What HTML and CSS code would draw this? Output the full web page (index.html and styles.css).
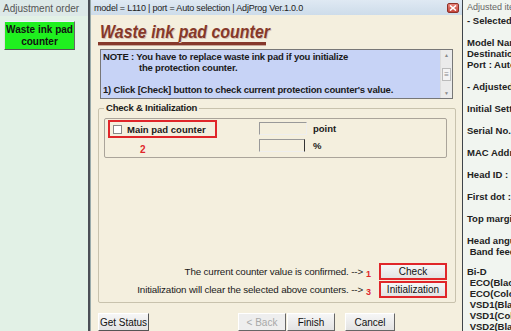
FILE: index.html
```html
<!doctype html>
<html lang="en">
<head>
<meta charset="utf-8" />
<title>AdjProg - Waste ink pad counter</title>
<link rel="stylesheet" href="styles.css">
</head>
<body>
<div class="screen">
  <!-- left: adjustment order list -->
  <aside class="order">
    <div class="order-head">Adjustment order</div>
    <div class="step">Waste ink pad<br>counter</div>
  </aside>

  <!-- main dialog -->
  <div class="dialog">
    <div class="titlebar">
      <span class="title">model = L110 | port = Auto selection | AdjProg Ver.1.0.0</span>
      <span class="close">
        <svg width="8" height="6" viewBox="0 0 8 6"><path d="M1 0.5 L7 5.5 M7 0.5 L1 5.5" stroke="#fff" stroke-width="1.6"/></svg>
      </span>
    </div>

    <div class="body">
      <h1 class="heading"><span>Waste ink pad counter</span></h1>

      <div class="note">
        <div class="note-text">
          <p>NOTE : You have to replace waste ink pad if you initialize</p>
          <p class="indent">the protection counter.</p>
          <p>&nbsp;</p>
          <p>1) Click [Check] button to check current protection counter's value.</p>
        </div>
        <div class="vscroll">
          <span class="arr">&#9650;</span>
          <span class="thumb">&#8801;</span>
          <span class="arr">&#9660;</span>
        </div>
      </div>

      <div class="group">
        <div class="legend">Check &amp; Initialization</div>
        <div class="counters">
          <div class="crow">
            <div class="mark-box"><span class="check"></span>Main pad counter</div>
            <span class="field"></span>
            <span class="unit">point</span>
          </div>
          <div class="crow">
            <div class="mark-num">2</div>
            <span class="field"></span>
            <span class="unit">%</span>
          </div>
        </div>

        <div class="actions">
          <div class="arow">
            <span class="hint">The current counter value is confirmed. --&gt;</span>
            <span class="num">1</span>
            <span class="btn marked">Check</span>
          </div>
          <div class="arow">
            <span class="hint">Initialization will clear the selected above counters. --&gt;</span>
            <span class="num">3</span>
            <span class="btn marked">Initialization</span>
          </div>
        </div>
      </div>

      <div class="footer">
        <span class="btn status">Get Status</span>
        <span class="spacer"></span>
        <span class="btn nav disabled">&lt; Back</span>
        <span class="btn nav">Finish</span>
        <span class="btn nav cancel">Cancel</span>
      </div>
    </div>
  </div>

  <!-- right: adjusted items -->
  <aside class="items">
    <div class="items-head">Adjusted items</div>
    <p class="gap-s">- Selected</p>
    <p class="gap-l">Model Name</p>
    <p>Destination</p>
    <p>Port : Auto</p>
    <p class="gap-l">- Adjusted</p>
    <p class="gap-l">Initial Setting</p>
    <p class="gap-l">Serial No.</p>
    <p class="gap-l">MAC Address</p>
    <p class="gap-l">Head ID :</p>
    <p class="gap-l">First dot :</p>
    <p class="gap-l">Top margin</p>
    <p class="gap-l">Head angular</p>
    <p>&nbsp;Band feed</p>
    <p class="gap-m">Bi-D</p>
    <p>&nbsp;ECO(Black</p>
    <p>&nbsp;ECO(Color</p>
    <p>&nbsp;VSD1(Black</p>
    <p>&nbsp;VSD1(Color</p>
    <p>&nbsp;VSD2(Black</p>
  </aside>
</div>
</body>
</html>
```

FILE: styles.css
```css
:root{
  --panel:#e2f1e6;
  --dlg:#f4efde;
  --note:#c7d3f6;
  --title:#d8e4ef;
  --brown:#86382a;
  --mark:#e0262a;
  --text:#1a1a1a;
}
*{box-sizing:border-box;margin:0;padding:0}
body{
  width:511px;height:331px;overflow:hidden;
  font-family:"Liberation Sans",Arial,sans-serif;font-size:9px;color:var(--text);
  background:var(--panel);
}
.screen{display:flex;height:331px}

/* left list */
.order{width:90px;flex:none;background:var(--panel);border-right:2px solid #4a4e55}
.order-head{height:16px;padding:3px 0 0 3px;color:#555;font-size:10px;background:#dde9e8}
.step{
  margin:5px 0 0 4px;width:71px;height:29px;
  background:#1ff01f;color:#111;font-weight:bold;font-size:10px;line-height:12px;
  text-align:center;padding-top:2px;
  border:1px solid;border-color:#eef #666 #555 #ddd;
}

/* dialog */
.dialog{width:372px;flex:none;display:flex;flex-direction:column;border-left:1px solid #9aa;background:var(--dlg)}
.titlebar{
  height:15px;flex:none;display:flex;align-items:center;justify-content:space-between;
  padding:0 3px 0 3px;background:linear-gradient(#dfe9f3,#cddcea);
}
.title{font-size:9px;color:#222;letter-spacing:-0.2px}
.close{
  width:12px;height:10px;display:flex;align-items:center;justify-content:center;
  background:linear-gradient(#e5827a,#c6443a);border:1px solid #8e3128;border-radius:2px;
}
.body{flex:1;padding:6px 0 0 7px;display:flex;flex-direction:column}
.heading{
  font-size:19px;font-style:italic;font-weight:bold;color:var(--brown);
  line-height:21px;white-space:nowrap;padding-left:2px;
  width:168px;border-bottom:3px solid var(--brown);box-shadow:0 1px 0 #c9a89a;
  text-shadow:1px 1px 0 #d8c4b4;
}
.heading span{display:inline-block;transform:scaleX(0.84);transform-origin:left center}
.note{
  margin:4px 0 0 2px;width:353px;height:50px;display:flex;
  background:var(--note);border:1px solid #777;
}
.note-text{flex:1;padding:1px 0 0 2px;font-weight:bold;font-size:9.5px;line-height:11px;letter-spacing:-0.2px}
.note-text .indent{padding-left:36px}
.vscroll{
  width:12px;display:flex;flex-direction:column;justify-content:space-between;align-items:center;
  background:#ebebeb;border-left:1px solid #ddd;color:#888;font-size:5px;padding:2px 0;
}
.vscroll .thumb{font-size:8px;border:1px solid #bbb;background:#f4f4f4;width:9px;text-align:center;line-height:11px}

/* group box */
.group{
  position:relative;margin:9px 0 0 0;width:358px;height:195px;
  border:1px solid #c8c2ad;border-radius:2px;padding:9px 8px 0 5px;
}
.legend{position:absolute;top:-7px;left:5px;padding:0 2px;background:var(--dlg);font-weight:bold;font-size:9.5px;letter-spacing:-0.2px}
.counters{
  height:40px;border:1px solid #aaa49a;border-radius:2px;padding:3px 0 0 3px;
  display:flex;flex-direction:column;gap:4px;
}
.crow{display:flex;align-items:center;height:13px}
.mark-box{
  width:109px;height:18px;margin:-2px 0 -3px 0;border:2px solid var(--mark);
  display:flex;align-items:center;gap:5px;padding-left:3px;font-weight:bold;font-size:9.5px;
}
.check{width:9px;height:9px;background:#fff;border:1px solid #888}
.mark-num{width:109px;padding-left:32px;color:var(--mark);font-weight:bold;font-size:10px;margin-top:7px}
.field{margin-left:42px;width:48px;height:13px;border:1px solid;border-color:#999 #eee #eee #999;background:var(--dlg)}
.crow:last-child .field{width:46px;border-right:1px solid #333}
.unit{margin-left:6px;font-weight:bold;font-size:9.5px}
.crow:last-child .unit{margin-left:8px}

.actions{margin-top:105px;display:flex;flex-direction:column;gap:1px}
.arow{display:flex;align-items:center;justify-content:flex-end;padding-right:0}
.hint{font-size:9.8px;letter-spacing:-0.15px}
.num{color:var(--mark);font-weight:bold;font-size:9px;width:16px;padding-left:3px;margin-top:4px}
.btn{
  display:flex;align-items:center;justify-content:center;height:17px;
  background:linear-gradient(#f6f6f6,#e3e3e3);border:1px solid #888;font-size:10px;color:#111;
}
.btn.marked{width:68px;border:2px solid var(--mark)}

/* footer */
.footer{margin-top:10px;display:flex;align-items:flex-start;height:20px;padding-right:67px}
.status{width:51px;height:18px;border:1px solid #555;border-color:#fff #555 #555 #fff}
.spacer{flex:1}
.nav{width:48px;height:18px;border-color:#fff #666 #666 #fff}
.nav + .nav{margin-left:1px}
.nav.disabled{color:#a8a8a8;background:#eee}
.nav.cancel{margin-left:10px;width:50px}

/* right list */
.items{flex:1;background:#f1f5f0;border-left:1px solid #3f444a;padding-left:4px;overflow:hidden;white-space:nowrap;font-size:9.5px}
.items-head{color:#666;height:15px;padding-top:2px;font-size:9px}
.items p{line-height:11px;font-weight:bold;color:#222}
.items .gap-s{margin-top:0}
.items .gap-m{margin-top:9px}
.items .gap-l{margin-top:11px}
```
